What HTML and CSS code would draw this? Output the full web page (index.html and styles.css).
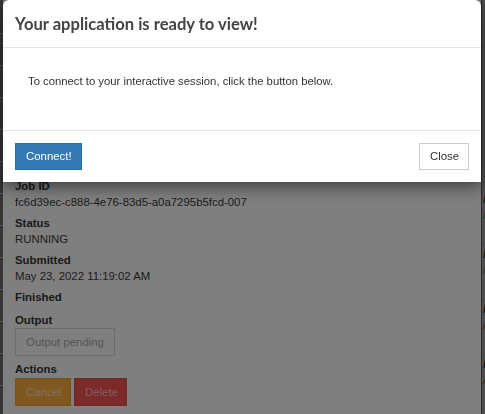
FILE: index.html
```html
<!DOCTYPE html>
<html lang="en">
<head>
<meta charset="utf-8">
<title>Interactive session</title>
<link rel="stylesheet" href="styles.css">
</head>
<body>
<div class="page">
  <aside class="rail"></aside>
  <main class="panel">
    <div class="field"><div class="label">Job ID</div><div class="value">fc6d39ec-c888-4e76-83d5-a0a7295b5fcd-007</div></div>
    <div class="field"><div class="label">Status</div><div class="value">RUNNING</div></div>
    <div class="field"><div class="label">Submitted</div><div class="value">May 23, 2022 11:19:02 AM</div></div>
    <div class="field field-empty"><div class="label">Finished</div></div>
    <div class="field"><div class="label">Output</div><button class="btn btn-default" disabled>Output pending</button></div>
    <div class="field"><div class="label">Actions</div>
      <div class="actions"><button class="btn btn-warning" disabled>Cancel</button><button class="btn btn-danger" disabled>Delete</button></div>
    </div>
  </main>
  <section class="side">
    <div class="row"><span class="p">P</span><span class="s ok">N</span></div>
    <div class="row"><span class="p">P</span><span class="s ok">N</span></div>
    <div class="row"><span class="p">P</span><span class="s bad">A</span></div>
    <div class="row"><span class="p">P</span><span class="s bad">A</span></div>
  </section>
</div>
<div class="backdrop"></div>
<div class="modal">
  <div class="modal-header"><h4 class="modal-title">Your application is ready to view!</h4></div>
  <div class="modal-body"><p>To connect to your interactive session, click the button below.</p></div>
  <div class="modal-footer">
    <button class="btn btn-primary">Connect!</button>
    <button class="btn btn-close">Close</button>
  </div>
</div>
</body>
</html>
```
FILE: styles.css
```css
* { box-sizing: border-box; }
html, body { margin: 0; height: 100%; }
body {
  font-family: "Liberation Sans", Arial, sans-serif;
  color: #333;
  overflow: hidden;
  background: #666;
}
.page { display: flex; height: 414px; }
.rail {
  width: 3px;
  background: #6a6a6a repeating-linear-gradient(to bottom, transparent 0 31px, #aaa 31px 32px);
  background-position: 0 2px;
}
.panel {
  width: 478px;
  background: #fff;
  padding: 178px 12px 0;
}
.field { margin-bottom: 5px; }
.field-empty { margin-bottom: 7px; }
.label { font-size: 11.4px; font-weight: 700; line-height: 16px; color: #333; }
.value { font-size: 11.4px; line-height: 16px; color: #3a3a3a; }
.field .btn-default { margin-bottom: 3px; }
.btn {
  font-family: "Liberation Sans", Arial, sans-serif;
  font-size: 11.4px;
  line-height: 15px;
  padding: 5px 10px;
  border: 1px solid transparent;
  border-radius: 0;
  cursor: pointer;
}
.btn-default {
  width: 100px; height: 28px;
  background: #fff; border-color: #d8d8d8; color: #aaa;
  display: block;
}
.actions { display: flex; gap: 3px; margin-top: 1px; }
.btn-warning { width: 56px; height: 28px; background: #ffb03f; color: #ffe2bb; border-color: #f5a530; }
.btn-danger { width: 53px; height: 28px; background: #f95352; color: #ffbcbc; border-color: #ec4a48; }
.side {
  flex: 1;
  background: #9c9c9c;
  border-left: 1px solid #555;
  padding-top: 190px;
  font-size: 12px;
  font-style: italic;
  overflow: hidden;
}
.row { height: 55px; display: flex; flex-direction: column; padding-left: 1px; border-bottom: 1px solid #888; }
.row .p { color: #222; line-height: 18px; }
.row .ok { color: #2d7a3a; }
.row .bad { color: #b03030; }
.backdrop {
  position: fixed; inset: 0;
  background: rgba(0,0,0,0.5);
}
.modal {
  position: absolute; top: 0; left: 3px;
  width: 478px;
  background: #fff;
  border-radius: 6px 6px 0 0;
  box-shadow: 0 5px 15px rgba(0,0,0,0.5);
}
.modal-header {
  height: 48px;
  padding: 14px 12px 0;
  border-bottom: 1px solid #e5e5e5;
}
.modal-title {
  margin: 0;
  font-family: Lato, "Noto Sans", sans-serif;
  font-weight: 700;
  font-size: 16.6px;
  line-height: 20px;
  color: #444;
}
.modal-body { padding: 25px 25px 41px; }
.modal-body p { margin: 0; font-size: 11.3px; line-height: 16px; color: #333; }
.modal-footer {
  display: flex; justify-content: space-between; align-items: center;
  padding: 12px;
  border-top: 1px solid #e5e5e5;
}
.btn-primary { width: 67px; height: 27px; background: #337ab7; border-color: #2e6da4; color: #fff; }
.btn-close { width: 50px; height: 27px; background: #fff; border-color: #ccc; color: #333; }
```
